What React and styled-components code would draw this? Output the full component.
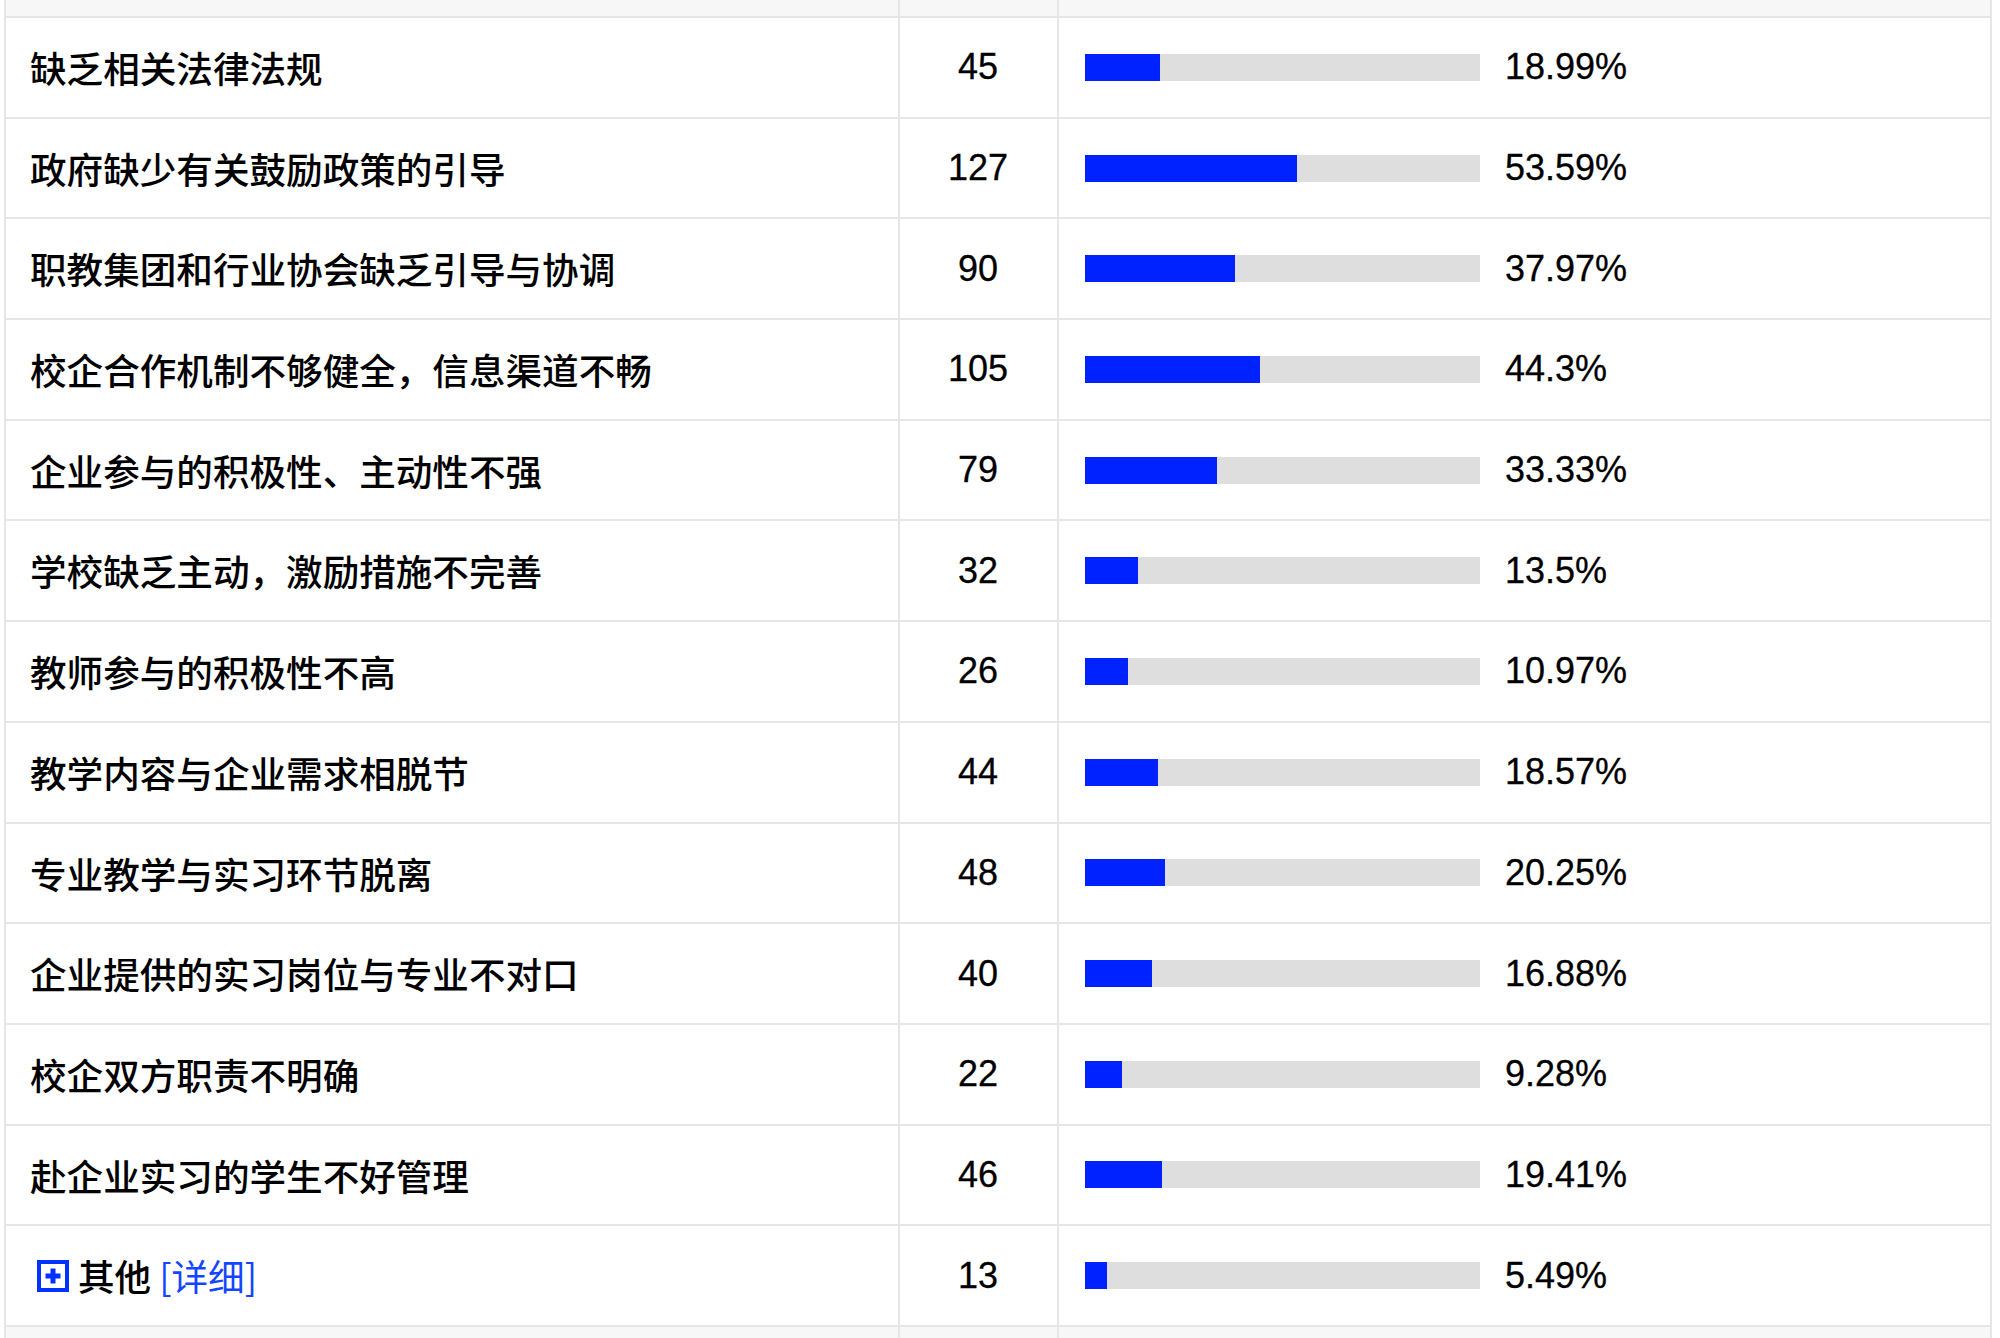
import React from "react";
import styled, { createGlobalStyle } from "styled-components";

const Global = createGlobalStyle`
  html, body { margin: 0; padding: 0; background: #fff; }
  body { font-family: "Liberation Sans", "Noto Sans CJK SC", sans-serif; overflow: hidden; }
`;

const Table = styled.div`
  margin-left: 4px;
  width: 1988px;
  border-left: 2px solid #e6e6e6;
  border-right: 2px solid #e6e6e6;
  box-sizing: border-box;
`;

const Row = styled.div`
  display: grid;
  grid-template-columns: 894px 159px 1fr;
  height: ${(p) => p.$h}px;
  box-sizing: border-box;
  border-bottom: ${(p) => (p.$last ? "0" : "2px solid #e6e6e6")};
  background: ${(p) => (p.$gray ? "#f7f7f7" : "#fff")};
`;

const Cell = styled.div`
  display: flex;
  align-items: center;
  box-sizing: border-box;
  border-right: ${(p) => (p.$noBorder ? "0" : "2px solid #e6e6e6")};
  justify-content: ${(p) => (p.$center ? "center" : "flex-start")};
  padding-left: ${(p) => p.$pl || 0}px;
  font-size: 36px;
  color: #000;
  white-space: nowrap;
`;

const Label = styled.span`
  font-family: "Noto Sans CJK SC", "Liberation Sans", sans-serif;
  font-size: 36.6px;
  font-weight: 500;
  line-height: 1;
  position: relative;
  top: 1px;
`;

const Count = styled.span`
  font-family: "Liberation Sans", sans-serif;
  font-size: 36px;
  line-height: 1;
  margin-left: -1px;
  -webkit-text-stroke: 0.3px #000;
`;

const Track = styled.div`
  width: 395px;
  height: 27px;
  background: #dedede;
  flex: none;
  display: flex;
`;

const Fill = styled.div`
  height: 100%;
  background: #0022ff;
`;

const Pct = styled.span`
  font-family: "Liberation Sans", sans-serif;
  font-size: 36px;
  line-height: 1;
  margin-left: 25px;
  -webkit-text-stroke: 0.3px #000;
`;

const PlusBox = styled.span`
  display: inline-flex;
  width: 32px;
  height: 32px;
  margin-left: 5px;
  margin-right: 9px;
  flex: none;
`;

const Link = styled.span`
  color: #1446ff;
  font-weight: 400;
  margin-left: 8px;
`;

const data = [
  ["缺乏相关法律法规", 45, 18.99],
  ["政府缺少有关鼓励政策的引导", 127, 53.59],
  ["职教集团和行业协会缺乏引导与协调", 90, 37.97],
  ["校企合作机制不够健全，信息渠道不畅", 105, 44.3],
  ["企业参与的积极性、主动性不强", 79, 33.33],
  ["学校缺乏主动，激励措施不完善", 32, 13.5],
  ["教师参与的积极性不高", 26, 10.97],
  ["教学内容与企业需求相脱节", 44, 18.57],
  ["专业教学与实习环节脱离", 48, 20.25],
  ["企业提供的实习岗位与专业不对口", 40, 16.88],
  ["校企双方职责不明确", 22, 9.28],
  ["赴企业实习的学生不好管理", 46, 19.41],
];

const PlusIcon = () => (
  <PlusBox>
    <svg width="32" height="32" viewBox="0 0 32 32">
      <rect x="2" y="2" width="28" height="28" fill="#fff" stroke="#0033ff" strokeWidth="4" />
      <rect x="8.5" y="13.5" width="15" height="5" fill="#0033ff" />
      <rect x="13.5" y="8.5" width="5" height="15" fill="#0033ff" />
    </svg>
  </PlusBox>
);

const BarCell = ({ pct }) => (
  <Cell $noBorder $pl={26}>
    <Track>
      <Fill style={{ width: `${(pct / 100) * 395}px` }} />
    </Track>
    <Pct>{pct}%</Pct>
  </Cell>
);

export default function App() {
  return (
    <>
      <Global />
      <Table>
        <Row $h={18} $gray>
          <Cell />
          <Cell />
          <Cell $noBorder />
        </Row>
        {data.map(([label, n, pct]) => (
          <Row key={label} $h={100.7}>
            <Cell $pl={24}>
              <Label>{label}</Label>
            </Cell>
            <Cell $center>
              <Count>{n}</Count>
            </Cell>
            <BarCell pct={pct} />
          </Row>
        ))}
        <Row $h={100.7}>
          <Cell $pl={26}>
            <PlusIcon />
            <Label>
              其他<Link>[详细]</Link>
            </Label>
          </Cell>
          <Cell $center>
            <Count>13</Count>
          </Cell>
          <BarCell pct={5.49} />
        </Row>
        <Row $h={40} $gray $last>
          <Cell />
          <Cell />
          <Cell $noBorder />
        </Row>
      </Table>
    </>
  );
}
